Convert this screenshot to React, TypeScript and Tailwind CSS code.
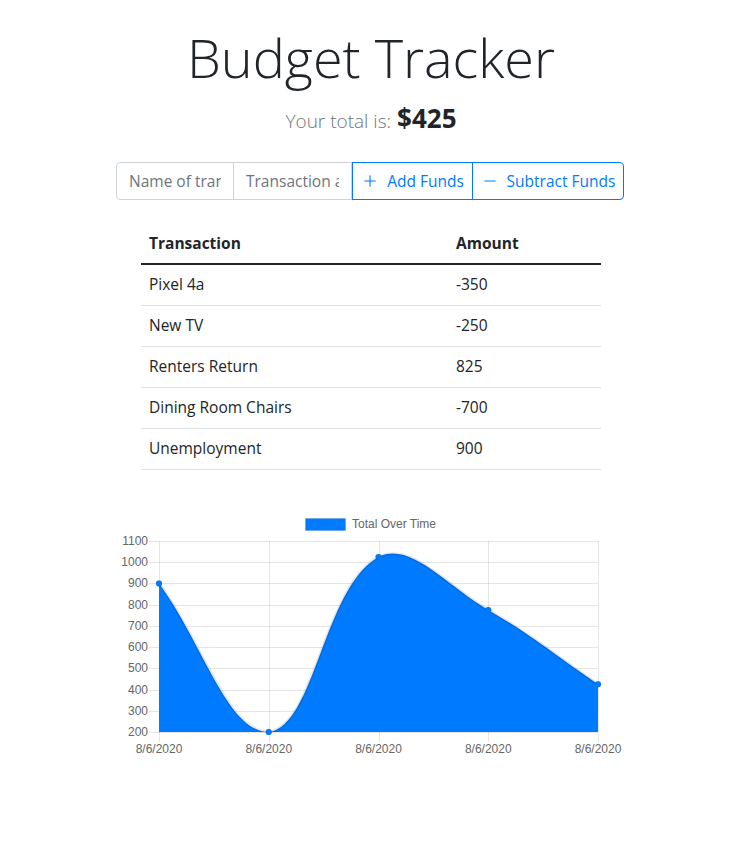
import { Plus, Minus } from "lucide-react";

const transactions = [
  { name: "Pixel 4a", amount: -350 },
  { name: "New TV", amount: -250 },
  { name: "Renters Return", amount: 825 },
  { name: "Dining Room Chairs", amount: -700 },
  { name: "Unemployment", amount: 900 },
];

// running totals, oldest first
const totals = (() => {
  let sum = 0;
  return [...transactions].reverse().map((t) => (sum += t.amount));
})();

const W = 510;
const H = 260;
const left = 43;
const right = 482;
const top = 36;
const bottom = 227;
const yMin = 200;
const yMax = 1100;

const px = (i: number) => left + (i * (right - left)) / (totals.length - 1);
const py = (v: number) => bottom - ((v - yMin) * (bottom - top)) / (yMax - yMin);

type Pt = { x: number; y: number };

// same spline as chart.js 2 (tension 0.4)
const buildPath = (pts: Pt[]) => {
  const t = 0.4;
  const ctrl = pts.map((mid, i) => {
    const prev = pts[i - 1] || mid;
    const next = pts[i + 1] || mid;
    const d01 = Math.hypot(mid.x - prev.x, mid.y - prev.y);
    const d12 = Math.hypot(next.x - mid.x, next.y - mid.y);
    let s01 = d01 / (d01 + d12);
    let s12 = d12 / (d01 + d12);
    if (isNaN(s01)) s01 = 0;
    if (isNaN(s12)) s12 = 0;
    const fa = t * s01;
    const fb = t * s12;
    const cap = (p: Pt) => ({
      x: Math.min(Math.max(p.x, left), right),
      y: Math.min(Math.max(p.y, top), bottom),
    });
    return {
      prev: cap({ x: mid.x - fa * (next.x - prev.x), y: mid.y - fa * (next.y - prev.y) }),
      next: cap({ x: mid.x + fb * (next.x - prev.x), y: mid.y + fb * (next.y - prev.y) }),
    };
  });
  let d = `M ${pts[0].x} ${pts[0].y}`;
  for (let i = 1; i < pts.length; i++) {
    const c1 = ctrl[i - 1].next;
    const c2 = ctrl[i].prev;
    d += ` C ${c1.x} ${c1.y} ${c2.x} ${c2.y} ${pts[i].x} ${pts[i].y}`;
  }
  return d;
};

const Chart = () => {
  const pts = totals.map((v, i) => ({ x: px(i), y: py(v) }));
  const line = buildPath(pts);
  const area = `${line} L ${right} ${bottom} L ${left} ${bottom} Z`;
  const yTicks = [1100, 1000, 900, 800, 700, 600, 500, 400, 300, 200];

  return (
    <svg width={W} height={H} viewBox={`0 0 ${W} ${H}`} style={{ fontFamily: '"Liberation Sans", Arial, sans-serif' }}>
      {/* legend */}
      <rect x={189.5} y={13.5} width={40} height={12} fill="#007bff" stroke="rgba(0,0,0,0.1)" />
      <text x={236} y={23} fontSize={12} fill="#666">
        Total Over Time
      </text>

      {/* grid */}
      {yTicks.map((v) => (
        <g key={v}>
          <line x1={left - 10} x2={right} y1={Math.round(py(v)) + 0.5} y2={Math.round(py(v)) + 0.5} stroke="rgba(0,0,0,0.1)" />
          <text x={left - 11} y={py(v) + 4} fontSize={12} fill="#666" textAnchor="end">
            {v}
          </text>
        </g>
      ))}
      {totals.map((_, i) => (
        <g key={i}>
          <line x1={Math.round(px(i)) + 0.5} x2={Math.round(px(i)) + 0.5} y1={top} y2={bottom + 10} stroke="rgba(0,0,0,0.1)" />
          <text x={px(i)} y={bottom + 21} fontSize={12} fill="#666" textAnchor="middle">
            8/6/2020
          </text>
        </g>
      ))}

      {/* data */}
      <path d={area} fill="#007bff" />
      <path d={line} fill="none" stroke="rgba(0,0,0,0.1)" strokeWidth={3} />
      {pts.map((p, i) => (
        <circle key={i} cx={p.x} cy={p.y} r={3} fill="#007bff" stroke="rgba(0,0,0,0.1)" />
      ))}
    </svg>
  );
};

export default function App() {
  return (
    <div
      className="min-h-[846px] bg-white text-[#212529]"
      style={{ fontFamily: '"Segoe UI", "Open Sans", "Noto Sans", sans-serif' }}
    >
      <div className="mx-auto w-[510px] pt-[25px]">
        <h1 className="text-center text-[54px] font-light leading-[1.2]">Budget Tracker</h1>
        <div className="mt-[13px] flex items-baseline justify-center gap-[6px]">
          <span className="text-[19px] font-light text-[#6c757d]">Your total is:</span>
          <span className="text-[26px] font-bold leading-[1.2] text-[#212529]">$425</span>
        </div>

        <div className="mt-[27px] flex h-[38px] w-[508px]">
          <input
            placeholder="Name of transaction"
            className="w-[118px] rounded-l-[4px] border border-[#ced4da] px-3 text-[15.5px] text-[#495057] placeholder:text-[#6c757d] outline-none"
          />
          <input
            placeholder="Transaction amount"
            className="-ml-px w-[119px] border border-[#ced4da] px-3 text-[15.5px] text-[#495057] placeholder:text-[#6c757d] outline-none"
          />
          <button className="flex w-[121px] items-center justify-center gap-[8px] border border-[#007bff] text-[15.5px] text-[#007bff]">
            <Plus size={18} strokeWidth={1.5} />
            Add Funds
          </button>
          <button className="-ml-px flex w-[152px] items-center justify-center gap-[8px] rounded-r-[4px] border border-[#007bff] text-[15.5px] text-[#007bff]">
            <Minus size={18} strokeWidth={1.5} />
            Subtract Funds
          </button>
        </div>

        <table className="mx-auto mt-[24px] w-[460px] border-collapse text-left text-[15.5px]">
          <thead>
            <tr className="border-b-2 border-[#212529]">
              <th className="h-[40px] w-[307px] px-2 py-0 font-bold">Transaction</th>
              <th className="h-[40px] px-2 py-0 font-bold">Amount</th>
            </tr>
          </thead>
          <tbody>
            {transactions.map((t) => (
              <tr key={t.name} className="border-b border-[#dee2e6]">
                <td className="h-[41px] px-2 py-0">{t.name}</td>
                <td className="h-[41px] px-2 py-0">{t.amount}</td>
              </tr>
            ))}
          </tbody>
        </table>

        <div className="mt-[35px]">
          <Chart />
        </div>
      </div>
    </div>
  );
}
